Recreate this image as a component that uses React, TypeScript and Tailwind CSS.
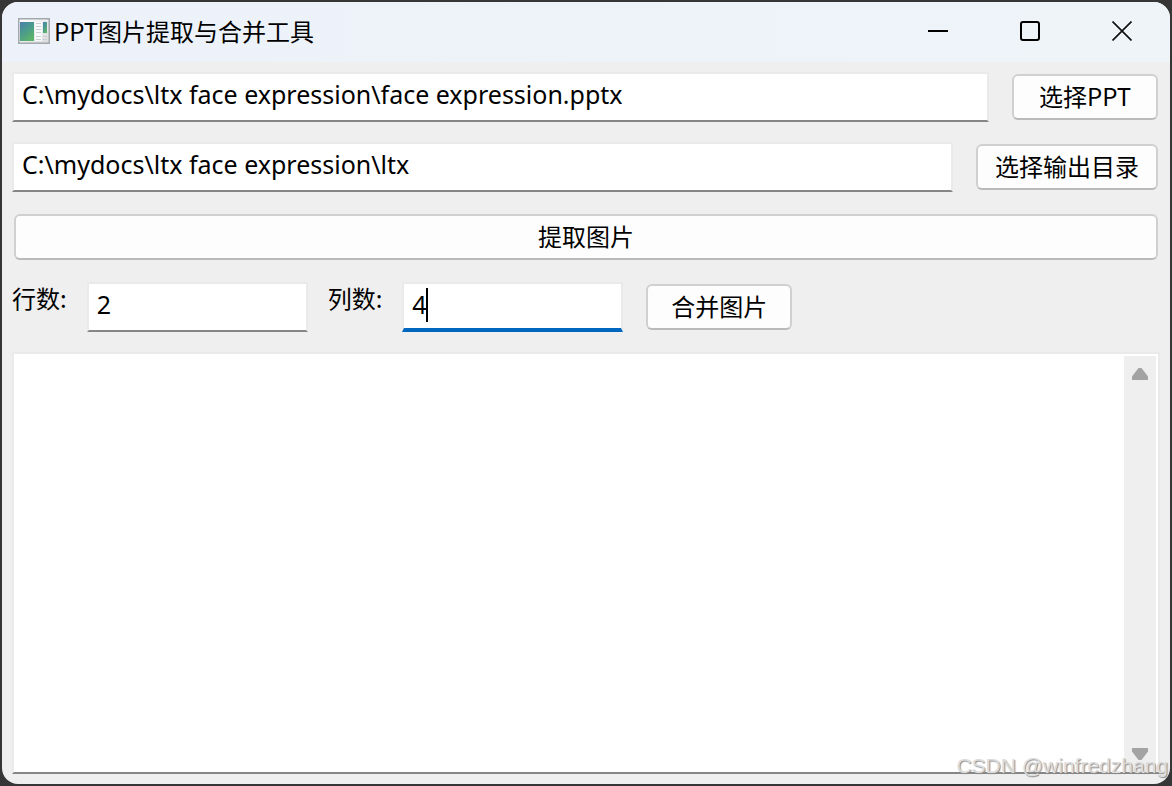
import { useState } from "react";
import type { ButtonHTMLAttributes, InputHTMLAttributes } from "react";

function PushButton({ className = "", ...rest }: ButtonHTMLAttributes<HTMLButtonElement>) {
  return (
    <button
      type="button"
      className={`h-[46px] shrink-0 rounded-md border-2 border-[#d0d0d0] border-b-[#bababa] bg-[#fdfdfd] pb-[2px] text-center leading-8 ${className}`}
      {...rest}
    />
  );
}

interface TextFieldProps extends InputHTMLAttributes<HTMLInputElement> {
  active?: boolean;
}

function TextField({ active = false, className = "", ...rest }: TextFieldProps) {
  const edge = active ? "border-b-4 border-b-[#0067c0] pb-1 caret-transparent" : "border-b-2 border-b-[#868686] pb-1.5";
  return (
    <input
      type="text"
      className={`h-[50px] min-w-0 border-x-2 border-t-2 border-x-[#eaeaea] border-t-[#eaeaea] bg-white px-2 font-['Noto_Sans','Noto_Sans_CJK_SC',sans-serif] text-[25px] outline-none ${edge} ${className}`}
      {...rest}
    />
  );
}

function AppIcon() {
  return (
    <svg width="32" height="26" viewBox="0 0 32 26" aria-hidden="true">
      <defs>
        <linearGradient id="screen" x1="0" y1="0" x2="0.6" y2="1">
          <stop offset="0" stopColor="#4a7fae" />
          <stop offset="0.5" stopColor="#4a9a8c" />
          <stop offset="1" stopColor="#5cb36c" />
        </linearGradient>
        <linearGradient id="frame" x1="0" y1="0" x2="1" y2="1">
          <stop offset="0" stopColor="#ffffff" />
          <stop offset="1" stopColor="#d9dbdd" />
        </linearGradient>
      </defs>
      <rect x="0.75" y="0.75" width="30.5" height="24.5" fill="url(#frame)" stroke="#a3a8ad" strokeWidth="1.5" />
      <rect x="2" y="4" width="14" height="19" fill="url(#screen)" />
      <rect x="17" y="4" width="7" height="19" fill="#f8f9fa" />
      <path d="M18 5.500h5M18 8.500h5M18 11.500h5M18 14.500h5M18 18.500h5M18 21.500h5M25 18.500h4M25 21.500h4" stroke="#cccfd1" strokeWidth="1" />
      <rect x="25" y="4" width="4" height="11" fill="url(#screen)" />
    </svg>
  );
}

export default function App() {
  const [source, setSource] = useState("C:\\mydocs\\ltx face expression\\face expression.pptx");
  const [output, setOutput] = useState("C:\\mydocs\\ltx face expression\\ltx");
  const [rows, setRows] = useState("2");
  const [cols, setCols] = useState("4");

  return (
    <div className="relative flex min-h-screen bg-[#363636] p-[2px] font-['Noto_Sans_CJK_SC',sans-serif] text-2xl text-black">
      <main className="flex flex-1 flex-col overflow-hidden rounded-2xl bg-[#efefef]">
        <header className="flex h-[60px] items-center bg-gradient-to-r from-[#edf2fa] to-[#eef4f8] pr-[2px] pb-[2px] pl-4">
          <AppIcon />
          <h1 className="ml-1 flex-1 font-['Noto_Sans_CJK_SC',sans-serif] text-2xl font-normal">PPT图片提取与合并工具</h1>
          <button type="button" aria-label="最小化" className="flex h-14 w-[92px] items-center justify-center">
            <svg width="20" height="20" viewBox="0 0 20 20">
              <path d="M0 10h20" stroke="#000" strokeWidth="2" />
            </svg>
          </button>
          <button type="button" aria-label="最大化" className="flex h-14 w-[92px] items-center justify-center">
            <svg width="20" height="20" viewBox="0 0 20 20">
              <rect x="1" y="1" width="18" height="18" rx="2" fill="none" stroke="#000" strokeWidth="2" />
            </svg>
          </button>
          <button type="button" aria-label="关闭" className="flex h-14 w-[92px] items-center justify-center">
            <svg width="20" height="20" viewBox="0 0 20 20">
              <path d="M0.500 0.500l19 19M19.500 0.500l-19 19" stroke="#111" strokeWidth="1.7" />
            </svg>
          </button>
        </header>

        <div className="flex flex-1 flex-col gap-5 px-[10px] pt-[10px] pb-[10px]">
          <div className="flex items-center gap-[23px] pr-[2px]">
            <TextField aria-label="PPT" className="flex-1" value={source} onChange={(e) => setSource(e.target.value)} />
            <PushButton className="w-[146px]">选择PPT</PushButton>
          </div>
          <div className="flex items-center gap-[23px] pr-[2px]">
            <TextField aria-label="输出目录" className="flex-1" value={output} onChange={(e) => setOutput(e.target.value)} />
            <PushButton className="w-[182px]">选择输出目录</PushButton>
          </div>
          <div className="flex h-[50px] items-center px-[2px]">
            <PushButton className="flex-1">提取图片</PushButton>
          </div>
          <div className="flex items-center">
            <label htmlFor="rows" className="mr-5 self-start leading-8">行数:</label>
            <TextField id="rows" className="mr-5 w-[221px]" value={rows} onChange={(e) => setRows(e.target.value)} />
            <label htmlFor="cols" className="mr-5 self-start leading-8">列数:</label>
            <div className="relative mr-[23px]">
              <TextField id="cols" active className="w-[221px]" value={cols} onChange={(e) => setCols(e.target.value)} />
              <span className="absolute top-1.5 left-6 h-[34px] w-[2px] bg-black" />
            </div>
            <PushButton className="w-[146px]">合并图片</PushButton>
          </div>
          <div className="flex flex-1 border-2 border-[#eaeaea] border-b-[#868686] bg-white">
            <textarea aria-label="日志" className="flex-1 resize-none bg-transparent px-2 py-1 outline-none" />
            <div className="mt-[2px] mr-[2px] flex w-8 flex-col items-center justify-between bg-[#efefef] pt-3 pb-3">
              <button type="button" aria-label="向上滚动">
                <svg width="16" height="12" viewBox="0 0 16 12" className="block">
                  <path d="M6.500 0h3L16 8.500V12H0V8.500z" fill="#a3a3a3" />
                </svg>
              </button>
              <button type="button" aria-label="向下滚动">
                <svg width="16" height="12" viewBox="0 0 16 12" className="block">
                  <path d="M0 0h16v3.500L9.500 12h-3L0 3.500z" fill="#a3a3a3" />
                </svg>
              </button>
            </div>
          </div>
        </div>
      </main>
      <p className="absolute right-1 bottom-1 font-['Liberation_Sans',sans-serif] text-[21px] leading-8 text-[#dcdcdc] [text-shadow:1px_1px_1px_#8a8a8a]">
        CSDN @winfredzhang
      </p>
    </div>
  );
}
